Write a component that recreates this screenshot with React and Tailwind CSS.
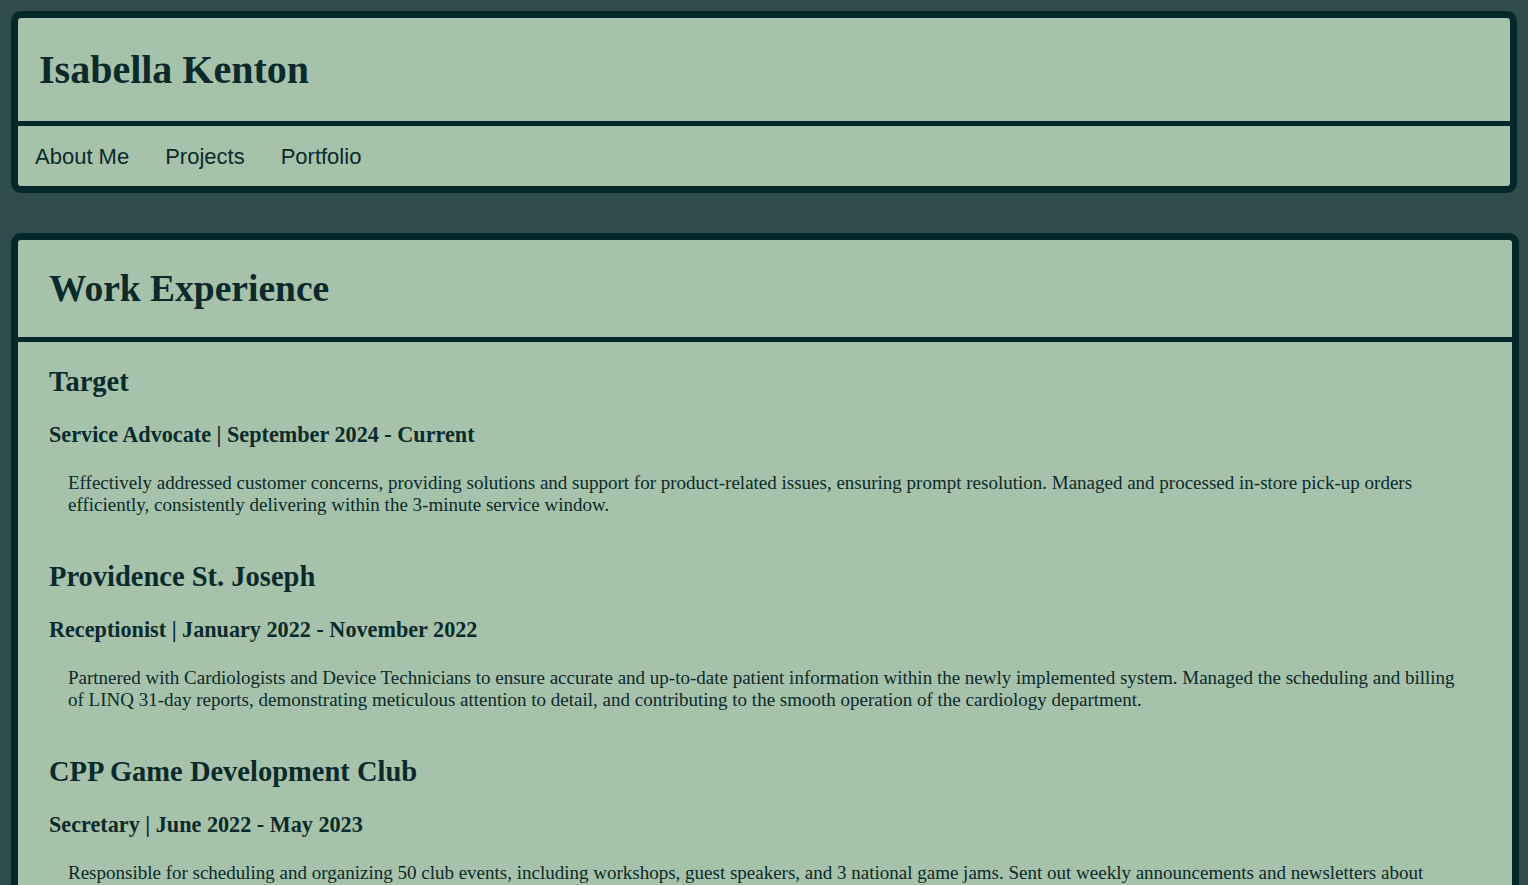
import React from 'react';

const jobs = [
  {
    company: 'Target',
    role: 'Service Advocate | September 2024 - Current',
    text: 'Effectively addressed customer concerns, providing solutions and support for product-related issues, ensuring prompt resolution. Managed and processed in-store pick-up orders efficiently, consistently delivering within the 3-minute service window.',
  },
  {
    company: 'Providence St. Joseph',
    role: 'Receptionist | January 2022 - November 2022',
    text: 'Partnered with Cardiologists and Device Technicians to ensure accurate and up-to-date patient information within the newly implemented system. Managed the scheduling and billing of LINQ 31-day reports, demonstrating meticulous attention to detail, and contributing to the smooth operation of the cardiology department.',
  },
  {
    company: 'CPP Game Development Club',
    role: 'Secretary | June 2022 - May 2023',
    text: 'Responsible for scheduling and organizing 50 club events, including workshops, guest speakers, and 3 national game jams. Sent out weekly announcements and newsletters about upcoming events, keeping club members informed and engaged throughout the year.',
  },
];

export default function App() {
  return (
    <div className="min-h-screen bg-[#2f4b4c] pt-[11px] pb-[40px] text-[#0b2a2b] font-['Liberation_Serif',serif]">
      {/* Header */}
      <header className="ml-[11px] mr-[11px] rounded-[10px] border-[7px] border-[#04282a] bg-[#a7c2aa] overflow-hidden">
        <div className="h-[108px] flex items-center pl-[21px] border-b-[5px] border-[#04282a]">
          <h1 className="text-[40px] leading-[46px] font-bold">Isabella Kenton</h1>
        </div>
        <nav className="h-[60px] flex items-center pl-[17px] gap-[36px] font-['Liberation_Sans',Arial,sans-serif] text-[22px] leading-[25px]">
          <a href="#about">About Me</a>
          <a href="#projects">Projects</a>
          <a href="#portfolio">Portfolio</a>
        </nav>
      </header>

      {/* Work experience */}
      <section className="mt-[40px] ml-[11px] mr-[9px] rounded-[10px] border-[7px] border-[#04282a] bg-[#a7c2aa] overflow-hidden">
        <div className="h-[102px] flex items-center pl-[31px] border-b-[5px] border-[#04282a]">
          <h2 className="text-[37.5px] leading-[44px] font-bold">Work Experience</h2>
        </div>
        <div className="pt-[24px] px-[31px]">
          {jobs.map((job) => (
            <div key={job.company} className="mb-[45px]">
              <h3 className="text-[28.5px] leading-[32px] font-bold mb-[24px]">{job.company}</h3>
              <h4 className="text-[22.2px] leading-[25px] font-bold mb-[25px]">{job.role}</h4>
              <p className="text-[19px] leading-[22px] px-[19px]">{job.text}</p>
            </div>
          ))}
        </div>
      </section>
    </div>
  );
}
